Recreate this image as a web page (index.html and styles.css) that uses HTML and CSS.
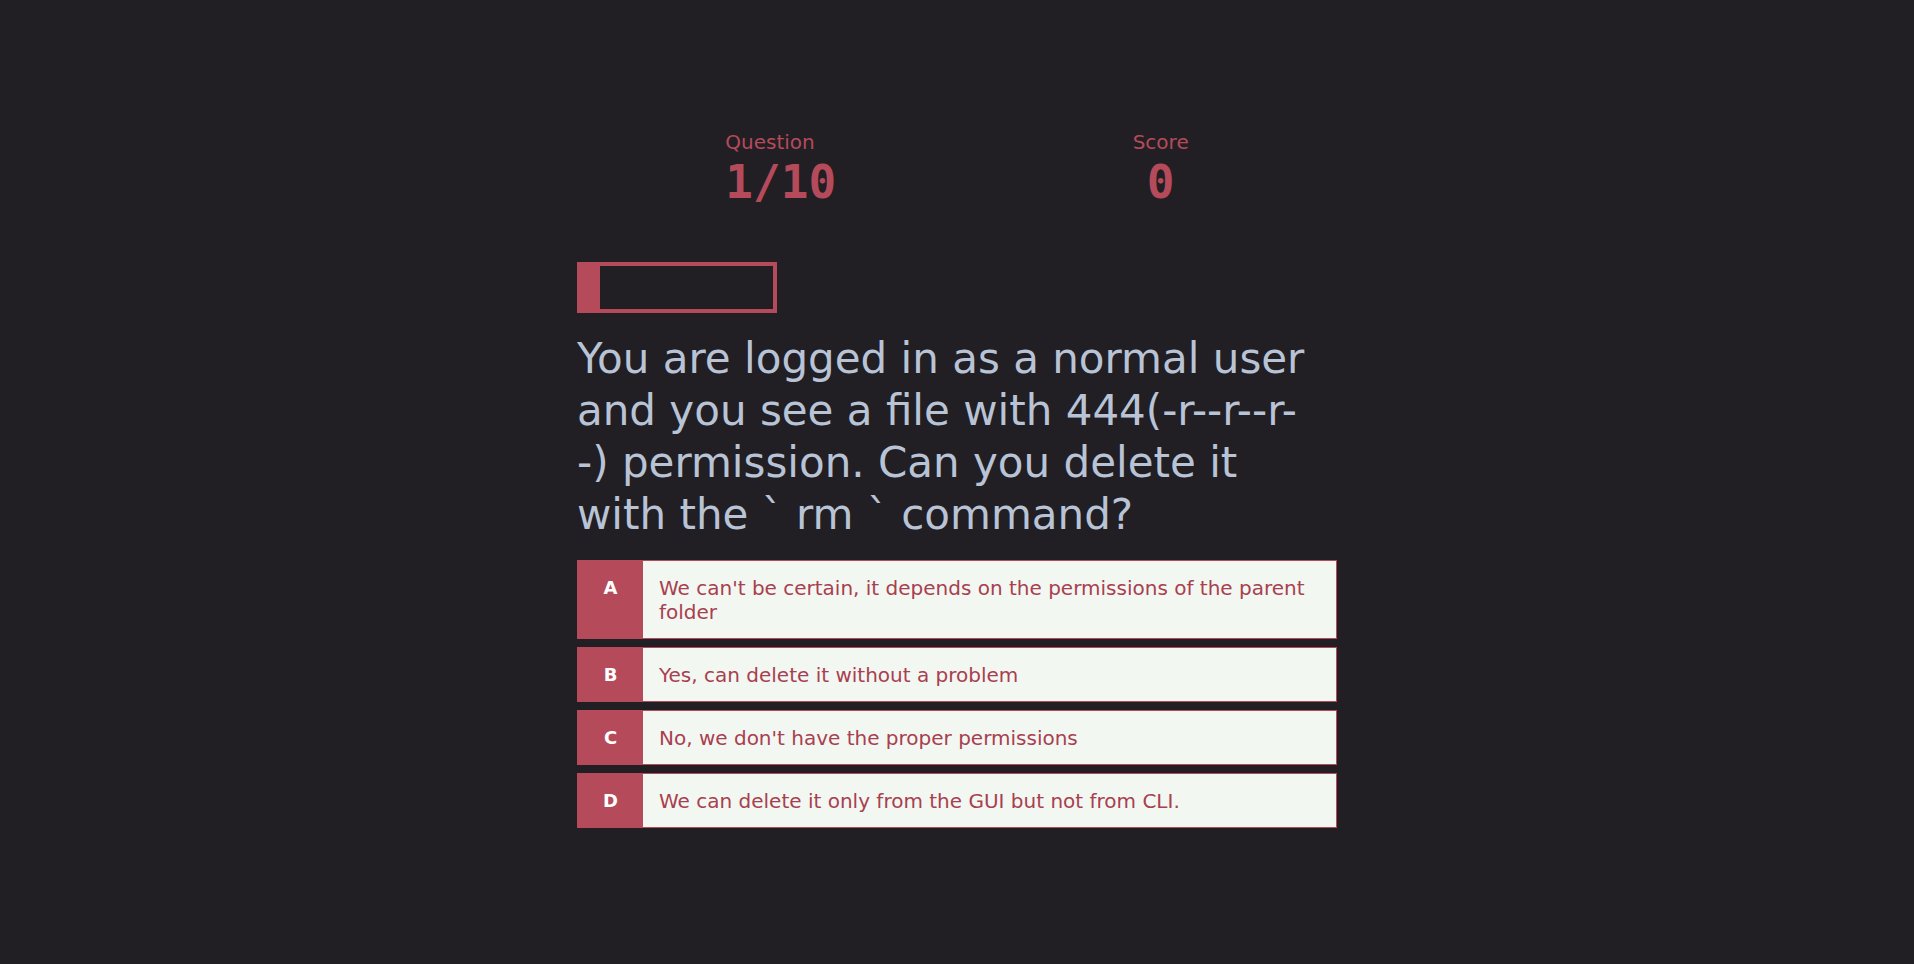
FILE: index.html
```html
<!DOCTYPE html>
<html>
<head>
<meta charset="utf-8">
<link rel="stylesheet" href="styles.css">
</head>
<body>
<main class="quiz">
  <header class="hud">
    <div class="hud-item hud-left">
      <p class="hud-label">Question</p>
      <p class="hud-value">1/10</p>
    </div>
    <div class="hud-item hud-center">
      <p class="hud-label">Score</p>
      <p class="hud-value">0</p>
    </div>
  </header>
  <div class="progress"><div class="progress-fill" style="width:10%"></div></div>
  <h2 class="question">You are logged in as a normal user and you see a file with 444(-r--r--r--) permission. Can you delete it with the ` rm ` command?</h2>
  <div class="choices">
    <div class="choice"><span class="choice-letter">A</span><span class="choice-text">We can't be certain, it depends on the permissions of the parent folder</span></div>
    <div class="choice"><span class="choice-letter">B</span><span class="choice-text">Yes, can delete it without a problem</span></div>
    <div class="choice"><span class="choice-letter">C</span><span class="choice-text">No, we don't have the proper permissions</span></div>
    <div class="choice"><span class="choice-letter">D</span><span class="choice-text">We can delete it only from the GUI but not from CLI.</span></div>
  </div>
</main>
</body>
</html>
```

FILE: styles.css
```css
html, body {
  margin: 0;
  padding: 0;
  background: #211f24;
  height: 100%;
}
body {
  font-family: "DejaVu Sans", "Noto Sans", sans-serif;
}
.quiz {
  width: 760px;
  margin: 0 auto;
  padding-top: 130px;
}
.hud {
  display: flex;
  justify-content: space-around;
}
.hud-item {
  display: flex;
  flex-direction: column;
}
.hud-left { align-items: flex-start; }
.hud-center { align-items: center; }
.hud-label {
  margin: 0;
  color: #b54a5b;
  font-size: 20px;
  line-height: 24px;
}
.hud-value {
  margin: 1px 0 0;
  color: #b54a5b;
  font-family: "DejaVu Sans Mono", monospace;
  font-weight: bold;
  font-size: 46px;
  line-height: 54px;
}
.progress {
  margin-top: 53px;
  width: 200px;
  height: 51px;
  box-sizing: border-box;
  border: 4px solid #b54a5b;
}
.progress-fill {
  height: 100%;
  background: #b54a5b;
}
.question {
  max-width: 745px;
  margin: 20px 0 19px;
  color: #b9c3d6;
  font-weight: normal;
  font-size: 42px;
  line-height: 52px;
}
.choices {
  display: flex;
  flex-direction: column;
  gap: 8px;
}
.choice {
  display: flex;
  min-height: 55px;
  background: #f3f7f2;
  border: 1px solid #b54a5b;
  box-sizing: border-box;
}
.choice-letter {
  flex: 0 0 65px;
  background: #b54a5b;
  color: #ffffff;
  font-weight: bold;
  font-size: 18px;
  line-height: 24px;
  text-align: center;
  padding-top: 15px;
}
.choice-text {
  flex: 1;
  align-self: center;
  padding: 15px 16px 14px;
  color: #a8404f;
  font-size: 20px;
  line-height: 24px;
}
```
